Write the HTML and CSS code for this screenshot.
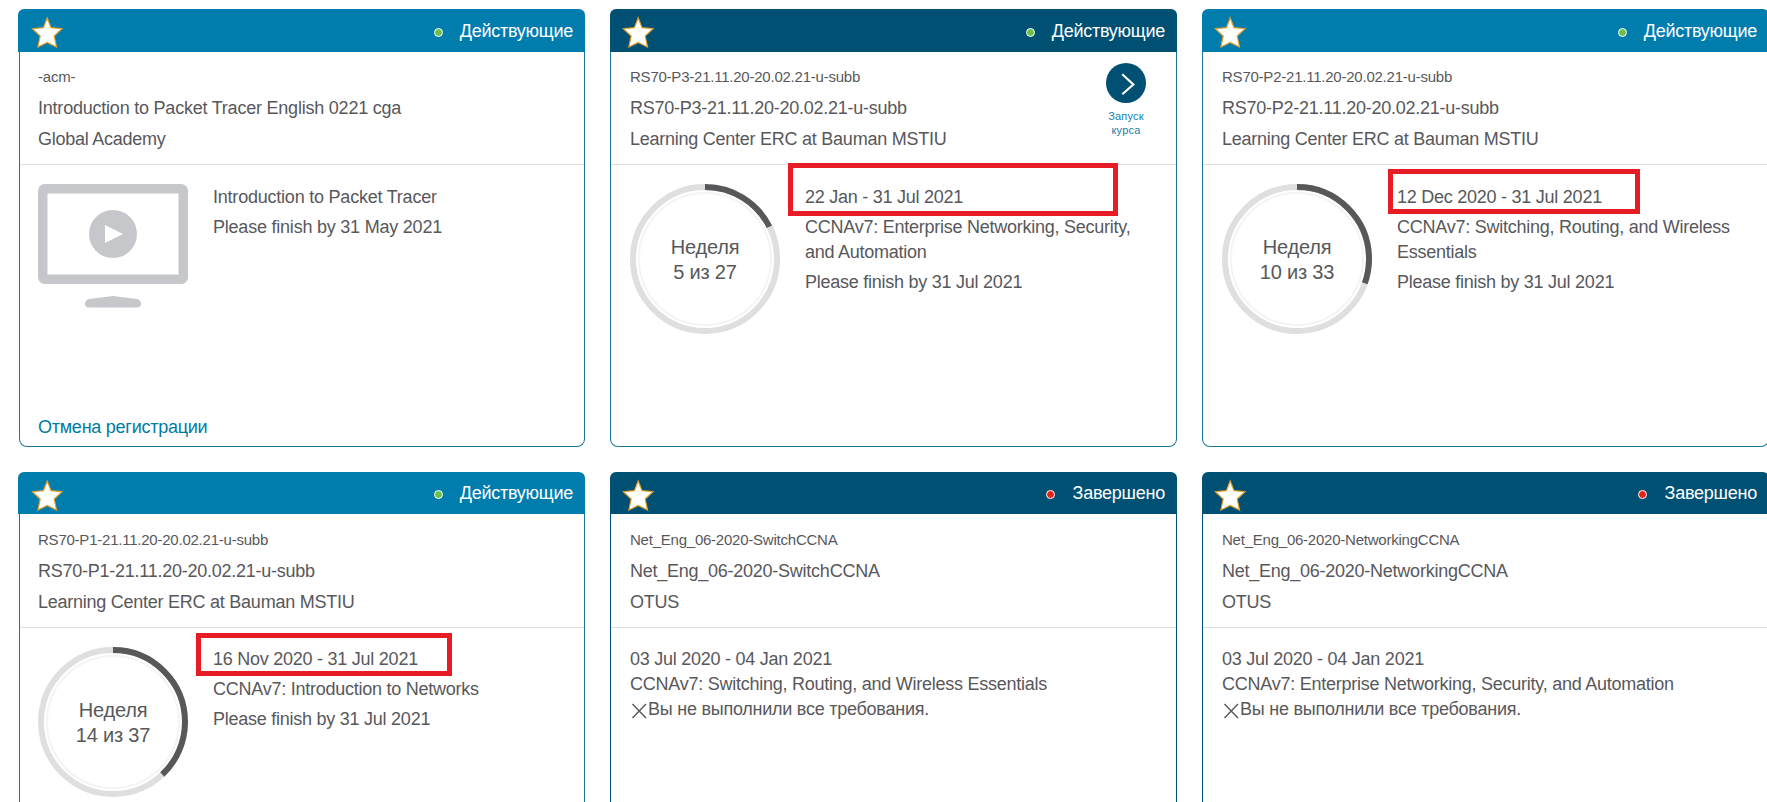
FILE: index.html
```html
<!DOCTYPE html>
<html lang="ru">
<head>
<meta charset="utf-8">
<title>Курсы</title>
<link rel="stylesheet" href="styles.css">
</head>
<body>
<svg class="defs" width="0" height="0" aria-hidden="true">
  <symbol id="star" viewBox="0 0 34 32">
    <path d="M17.200 2 L21 11.700 L32 12.700 L24.200 20 L26.500 31 L17.200 26.500 L7.900 31 L10.200 20 L2.400 12.700 L13.400 11.700 Z" fill="#fff" stroke="#e3a12c" stroke-width="1.2"/>
  </symbol>
  <symbol id="cross" viewBox="0 0 18 18">
    <path d="M2.500 2 L16 16 M16 2 L2.500 16" fill="none" stroke="#58585b" stroke-width="1.4"/>
  </symbol>
</svg>
<main class="grid">
  <article class="card first">
    <header class="bar"><svg class="star"><use href="#star"/></svg><span class="dot"></span><span class="status">Действующие</span></header>
    <div class="body">
      <section class="summary">
        <p class="code">-acm-</p>
        <p class="wide">Introduction to Packet Tracer English 0221 cga</p>
        <p>Global Academy</p>
      </section>
      <section class="details">
        <svg class="visual" viewBox="0 0 150 150">
          <rect x="4.75" y="4.75" width="140.5" height="90.5" rx="2" fill="none" stroke="#c6c7cb" stroke-width="9.5"/>
          <circle cx="75" cy="50" r="24" fill="#c6c7cb"/>
          <path d="M67 41 L85 50 L67 59 Z" fill="#fff"/>
          <path d="M51 115 L75 112 L99 115 Q103 116 103 119.500 Q103 123.500 99 123.500 H51 Q47 123.500 47 119.500 Q47 116 51 115 Z" fill="#c6c7cb"/>
        </svg>
        <div class="info wide">
          <p>Introduction to Packet Tracer</p>
          <p>Please finish by 31 May 2021</p>
        </div>
      </section>
      <a class="cancel">Отмена регистрации</a>
    </div>
  </article>

  <article class="card">
    <header class="bar dark"><svg class="star"><use href="#star"/></svg><span class="dot"></span><span class="status">Действующие</span></header>
    <div class="body">
      <section class="summary with-launch">
        <div>
          <p class="code">RS70-P3-21.11.20-20.02.21-u-subb</p>
          <p>RS70-P3-21.11.20-20.02.21-u-subb</p>
          <p>Learning Center ERC at Bauman MSTIU</p>
        </div>
        <a class="launch">
          <svg viewBox="0 0 40 40"><circle cx="20" cy="20" r="20" fill="#005073"/><path d="M16.300 11.300 L27.300 21.500 L16.300 31.300" fill="none" stroke="#fff" stroke-width="2.200"/></svg>
          <span>Запуск<br>курса</span>
        </a>
      </section>
      <section class="details">
        <div class="visual ring">
          <svg viewBox="0 0 150 150"><circle class="track" cx="75" cy="75" r="72"/><circle class="inner" cx="75" cy="75" r="66"/><circle class="progress" cx="75" cy="75" r="72" pathLength="100" stroke-dasharray="17.600 100"/></svg>
          <span>Неделя<br>5 из 27</span>
        </div>
        <div class="info">
          <p>22 Jan - 31 Jul 2021</p>
          <p>CCNAv7: Enterprise Networking, Security, and Automation</p>
          <p>Please finish by 31 Jul 2021</p>
        </div>
        <i class="mark mark-a"></i>
      </section>
    </div>
  </article>

  <article class="card">
    <header class="bar"><svg class="star"><use href="#star"/></svg><span class="dot"></span><span class="status">Действующие</span></header>
    <div class="body">
      <section class="summary">
        <p class="code">RS70-P2-21.11.20-20.02.21-u-subb</p>
        <p>RS70-P2-21.11.20-20.02.21-u-subb</p>
        <p>Learning Center ERC at Bauman MSTIU</p>
      </section>
      <section class="details">
        <div class="visual ring">
          <svg viewBox="0 0 150 150"><circle class="track" cx="75" cy="75" r="72"/><circle class="inner" cx="75" cy="75" r="66"/><circle class="progress" cx="75" cy="75" r="72" pathLength="100" stroke-dasharray="30.500 100"/></svg>
          <span>Неделя<br>10 из 33</span>
        </div>
        <div class="info">
          <p>12 Dec 2020 - 31 Jul 2021</p>
          <p>CCNAv7: Switching, Routing, and Wireless Essentials</p>
          <p>Please finish by 31 Jul 2021</p>
        </div>
        <i class="mark mark-b"></i>
      </section>
    </div>
  </article>

  <article class="card lower first">
    <header class="bar"><svg class="star"><use href="#star"/></svg><span class="dot"></span><span class="status">Действующие</span></header>
    <div class="body">
      <section class="summary">
        <p class="code">RS70-P1-21.11.20-20.02.21-u-subb</p>
        <p>RS70-P1-21.11.20-20.02.21-u-subb</p>
        <p>Learning Center ERC at Bauman MSTIU</p>
      </section>
      <section class="details">
        <div class="visual ring">
          <svg viewBox="0 0 150 150"><circle class="track" cx="75" cy="75" r="72"/><circle class="inner" cx="75" cy="75" r="66"/><circle class="progress" cx="75" cy="75" r="72" pathLength="100" stroke-dasharray="38 100"/></svg>
          <span>Неделя<br>14 из 37</span>
        </div>
        <div class="info">
          <p>16 Nov 2020 - 31 Jul 2021</p>
          <p>CCNAv7: Introduction to Networks</p>
          <p>Please finish by 31 Jul 2021</p>
        </div>
        <i class="mark mark-c"></i>
      </section>
    </div>
  </article>

  <article class="card lower done">
    <header class="bar dark"><svg class="star"><use href="#star"/></svg><span class="dot ended"></span><span class="status">Завершено</span></header>
    <div class="body">
      <section class="summary">
        <p class="code">Net_Eng_06-2020-SwitchCCNA</p>
        <p>Net_Eng_06-2020-SwitchCCNA</p>
        <p>OTUS</p>
      </section>
      <section class="details">
        <div class="info">
          <p>03 Jul 2020 - 04 Jan 2021</p>
          <p>CCNAv7: Switching, Routing, and Wireless Essentials</p>
          <p class="failed"><svg class="cross"><use href="#cross"/></svg>Вы не выполнили все требования.</p>
        </div>
      </section>
    </div>
  </article>

  <article class="card lower done">
    <header class="bar dark"><svg class="star"><use href="#star"/></svg><span class="dot ended"></span><span class="status">Завершено</span></header>
    <div class="body">
      <section class="summary">
        <p class="code">Net_Eng_06-2020-NetworkingCCNA</p>
        <p>Net_Eng_06-2020-NetworkingCCNA</p>
        <p>OTUS</p>
      </section>
      <section class="details">
        <div class="info">
          <p>03 Jul 2020 - 04 Jan 2021</p>
          <p>CCNAv7: Enterprise Networking, Security, and Automation</p>
          <p class="failed"><svg class="cross"><use href="#cross"/></svg>Вы не выполнили все требования.</p>
        </div>
      </section>
    </div>
  </article>
</main>
</body>
</html>
```

FILE: styles.css
```css
* { box-sizing: border-box; }
html, body { height: 100%; }
body {
  margin: 0;
  overflow: hidden;
  background: #fff;
  color: #58585b;
  font-family: "Liberation Sans", Arial, sans-serif;
  font-size: 18px;
  line-height: 25px;
  letter-spacing: -0.25px;
}
p { margin: 0; }
.defs { display: block; }
.grid {
  display: grid;
  grid-template-columns: repeat(3, 567px);
  grid-template-rows: 438px minmax(0, 1fr);
  gap: 25px;
  height: 100vh;
  padding: 9px 0 0 18px;
}
.card {
  display: flex;
  flex-direction: column;
  min-width: 0;
}
.bar {
  display: flex;
  align-items: center;
  flex: 0 0 43px;
  padding: 0 12px;
  border-radius: 6px 6px 0 0;
  background: #007cad;
  color: #fff;
}
.bar.dark { background: #005073; }
.lower .bar { flex-basis: 42px; }
.star { width: 34px; height: 32px; margin: 3px 0 0 -1px; }
.first .star { margin-left: 0; }
.dot {
  width: 9px;
  height: 9px;
  margin: 3px 17px 0 auto;
  border: 1px solid #fff;
  border-radius: 50%;
  background: #6cc04a;
}
.dot.ended { margin-right: 18px; background: #e2231a; }
.status { margin-top: 1px; }
.body {
  display: flex;
  flex-direction: column;
  flex: 1;
  border: 1px solid #1a7797;
  border-top: 0;
  border-radius: 0 0 8px 8px;
}
.lower .body { border-bottom: 0; border-radius: 0; }
.first .body { margin-left: 1px; }
.first .summary, .first .details, .first .cancel { padding-left: 18px; }
.done .body { border-color: #005073; }
.summary {
  flex: 0 0 113px;
  padding: 9px 19px 0;
  border-bottom: 1px solid #dfdfdf;
  line-height: 31px;
}
.lower .summary { flex-basis: 114px; padding-top: 10px; }
.code { margin-bottom: 1px; font-size: 15px; letter-spacing: -0.23px; }
.wide { letter-spacing: -0.22px; }
.with-launch { display: flex; justify-content: space-between; }
.launch {
  display: flex;
  flex-direction: column;
  align-items: center;
  gap: 6px;
  width: 40px;
  margin: 2px 11px 0 0;
  color: #1481ad;
  font-size: 11px;
  line-height: 14px;
  letter-spacing: 0.2px;
  text-align: center;
}
.launch svg { width: 40px; height: 40px; }
.details {
  position: relative;
  display: flex;
  flex: 1;
  gap: 25px;
  padding: 19px 19px 0;
}
.visual { flex: none; width: 150px; height: 150px; }
.ring { display: grid; place-items: center; }
.ring > * { grid-area: 1 / 1; }
.ring svg { width: 150px; height: 150px; transform: rotate(-90deg); }
.ring circle { fill: none; }
.ring span { font-size: 20px; letter-spacing: -0.2px; text-align: center; margin-top: 1px; }
.track { stroke: #dfdfdf; stroke-width: 6px; }
.inner { stroke: #f4f4f6; stroke-width: 2px; }
.progress { stroke: #58585b; stroke-width: 6px; }
.info { display: flex; flex-direction: column; gap: 5px; margin-top: 1px; }
.lower .info { margin-top: 0; }
.done .info { gap: 0; }
.failed { display: flex; align-items: center; }
.cross { width: 18px; height: 18px; margin-top: 2px; }
.cancel { padding: 0 19px 6px; color: #007ba4; }

/* Highlight frames drawn over the date lines */
.mark { position: absolute; border: 5px solid #e81c25; }
.mark-a { left: 177px; top: -2px; width: 330px; height: 53px; }
.mark-b { left: 185px; top: 4px; width: 252px; height: 45px; }
.mark-c { left: 176px; top: 5px; width: 256px; height: 43px; }
```
